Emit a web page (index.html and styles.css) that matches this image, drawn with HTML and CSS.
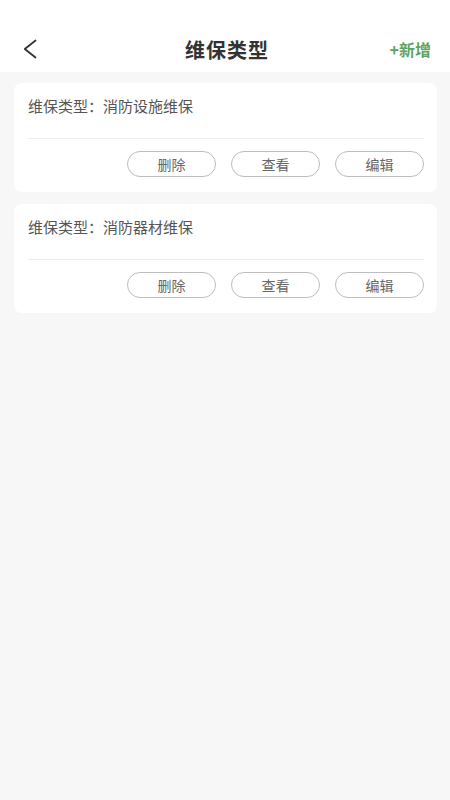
FILE: index.html
```html
<!DOCTYPE html>
<html lang="zh-CN">
<head>
<meta charset="utf-8">
<meta name="viewport" content="width=450">
<link rel="stylesheet" href="styles.css">
</head>
<body>
<header class="topbar">
  <div class="bar-row">
    <span class="back">
      <svg width="14" height="20" viewBox="0 0 14 20"><polyline points="12.5,1.5 1.8,10 12.5,18.5" fill="none" stroke="#333" stroke-width="1.8" stroke-linecap="round" stroke-linejoin="round"/></svg>
    </span>
    <h1 class="title">维保类型</h1>
    <span class="add">+新增</span>
  </div>
</header>
<main class="list">
  <section class="card">
    <div class="info">维保类型：消防设施维保</div>
    <div class="actions">
      <button class="btn">删除</button>
      <button class="btn">查看</button>
      <button class="btn">编辑</button>
    </div>
  </section>
  <section class="card">
    <div class="info">维保类型：消防器材维保</div>
    <div class="actions">
      <button class="btn">删除</button>
      <button class="btn">查看</button>
      <button class="btn">编辑</button>
    </div>
  </section>
</main>
</body>
</html>
```
FILE: styles.css
```css
* { box-sizing: border-box; }
html, body {
  margin: 0;
  padding: 0;
  background: #f7f7f7;
  font-family: "Noto Sans CJK SC", "Noto Sans", sans-serif;
}
body { min-height: 800px; }
.topbar {
  background: #fff;
  height: 72px;
  padding-top: 26px;
}
.bar-row {
  height: 46px;
  display: grid;
  grid-template-columns: 1fr auto 1fr;
  align-items: center;
  padding: 0 19px 0 23px;
}
.back { display: flex; align-items: center; }
.title {
  margin: 0;
  font-size: 20px;
  font-weight: 700;
  color: #333;
  letter-spacing: 1px;
}
.add {
  justify-self: end;
  font-size: 16px;
  font-weight: 600;
  color: #5ea462;
}
.list {
  padding: 11px 13px 0 14px;
  display: flex;
  flex-direction: column;
  gap: 12px;
}
.card {
  background: #fff;
  border-radius: 8px;
  padding: 0 13px 0 14px;
}
.info {
  height: 56px;
  padding-top: 13px;
  font-size: 15px;
  line-height: 20px;
  color: #555;
  border-bottom: 1px solid #ececec;
}
.actions {
  display: flex;
  justify-content: flex-end;
  gap: 15px;
  padding: 12px 0 15px;
}
.btn {
  width: 89px;
  height: 26px;
  border: 1px solid #bdbdbd;
  border-radius: 13px;
  background: #fff;
  font-family: inherit;
  font-size: 14px;
  color: #666;
  padding: 0;
  line-height: 24px;
}
```
